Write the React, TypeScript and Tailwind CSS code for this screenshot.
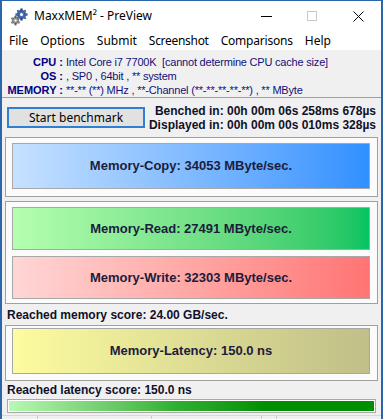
import React from 'react';

const ui = { fontFamily: '"Noto Sans", "Open Sans", sans-serif' };
const tah = { fontFamily: '"Liberation Sans", Arial, sans-serif' };

const Gears = () => (
  <svg width="18" height="18" viewBox="0 0 18 18">
    <g fill="#4a6fb5" stroke="#2c4a86" strokeWidth="0.6">
      <circle cx="11.5" cy="6.5" r="4.2" />
      {[0, 45, 90, 135, 180, 225, 270, 315].map(a => (
        <rect key={a} x="10.7" y="0.8" width="1.6" height="2.4" transform={`rotate(${a} 11.5 6.5)`} />
      ))}
    </g>
    <circle cx="11.5" cy="6.5" r="1.5" fill="#fff" />
    <g fill="#9a9a9a" stroke="#5a5a5a" strokeWidth="0.5">
      <circle cx="5.5" cy="12.5" r="3.2" />
      {[0, 60, 120, 180, 240, 300].map(a => (
        <rect key={a} x="4.8" y="7.9" width="1.4" height="2" transform={`rotate(${a} 5.5 12.5)`} />
      ))}
    </g>
    <circle cx="5.5" cy="12.5" r="1.1" fill="#fff" />
  </svg>
);

const Bar = ({ label, cls, h }: { label: string; cls: string; h: string }) => (
  <div className={`${cls} ${h} border border-[#a8a8a8] flex items-center justify-center`}>
    <span className="text-[13px] font-bold text-[#1c1c3c]" style={tah}>{label}</span>
  </div>
);

export default function App() {
  return (
    <div className="w-[383px] h-[419px] overflow-hidden bg-white flex flex-col border-l-2 border-r-2 border-t border-[#2b66ad]">
      {/* title bar */}
      <div className="h-[30px] flex items-center shrink-0" style={ui}>
        <div className="ml-[8px] mt-[1px]"><Gears /></div>
        <span className="ml-[6px] text-[12px] text-black">MaxxMEM² - PreView</span>
        <div className="ml-auto flex items-center">
          <div className="w-[46px] flex justify-center"><div className="w-[11px] h-px bg-black" /></div>
          <div className="w-[46px] flex justify-center"><div className="w-[10px] h-[10px] border border-[#c8c8c8]" /></div>
          <div className="w-[46px] flex justify-center">
            <svg width="11" height="11" viewBox="0 0 11 11"><path d="M0.5 0.5L10.5 10.5M10.5 0.5L0.5 10.5" stroke="#000" strokeWidth="1" /></svg>
          </div>
        </div>
      </div>
      {/* menu */}
      <div className="h-[19px] flex items-center text-[12px] text-black shrink-0 pl-[7px] gap-[12px]" style={ui}>
        <span>File</span>
        <span>Options</span>
        <span>Submit</span>
        <span className="tracking-[-0.3px]">Screenshot</span>
        <span className="tracking-[-0.2px]">Comparisons</span>
        <span>Help</span>
      </div>
      {/* client */}
      <div className="flex-1 bg-[#f0f0f0] flex flex-col" style={tah}>
        <div className="pt-[5px] text-[11px] leading-[14px] text-[#10107a] border-b border-[#a0a0a0]">
          <div className="flex"><span className="w-[61px] text-right font-bold text-[#000080]">CPU :</span><span className="ml-[3px] tracking-[-0.2px]">Intel Core i7 7700K&nbsp; [cannot determine CPU cache size]</span></div>
          <div className="flex"><span className="w-[61px] text-right font-bold text-[#000080]">OS :</span><span className="ml-[3px] tracking-[-0.2px]">, SP0 , 64bit , ** system</span></div>
          <div className="flex"><span className="w-[61px] text-right font-bold text-[#000080]">MEMORY :</span><span className="ml-[3px] tracking-[-0.2px]">**-** (**) MHz , **-Channel (**-**-**-**-**) , ** MByte</span></div>
        </div>
        <div className="flex items-center justify-between h-[39px] pl-[5px] pr-[5px]">
          <div className="w-[138px] h-[21px] border-2 border-[#2f7fd3] bg-[#e1e1e1] flex items-center justify-center text-[12px] text-black" style={ui}>
            Start benchmark
          </div>
          <div className="text-right text-[12px] leading-[14px] font-bold text-[#10102a]">
            <div>Benched in: 00h 00m 06s 258ms 678µs</div>
            <div>Displayed in: 00h 00m 00s 010ms 328µs</div>
          </div>
        </div>
        <div className="mx-[3px] border border-[#a0a0a0] bg-[#fbfbfb] pt-[5px] pb-[7px] pl-[6px] pr-[7px]">
          <Bar label="Memory-Copy: 34053 MByte/sec." h="h-[46px]" cls="bg-gradient-to-r from-[#c6e1ff] to-[#2f90ff]" />
        </div>
        <div className="mt-[4px] mx-[3px] border border-[#a0a0a0] bg-[#fbfbfb] pt-[5px] pb-[4px] pl-[6px] pr-[7px] flex flex-col gap-[6px]">
          <Bar label="Memory-Read: 27491 MByte/sec." h="h-[43px]" cls="bg-gradient-to-r from-[#b4ffb0] to-[#00c462]" />
          <Bar label="Memory-Write: 32303 MByte/sec." h="h-[43px]" cls="bg-gradient-to-r from-[#ffd6d6] to-[#ff7474]" />
        </div>
        <div className="h-[21px] flex items-center pl-[5px] text-[12px] font-bold text-[#10102a]">Reached memory score: 24.00 GB/sec.</div>
        <div className="mx-[3px] border border-[#a0a0a0] bg-[#fbfbfb] pt-[2px] pb-[6px] pl-[6px] pr-[7px]">
          <Bar label="Memory-Latency: 150.0 ns" h="h-[46px]" cls="bg-gradient-to-r from-[#fdfca0] to-[#bfbf88]" />
        </div>
        <div className="h-[18px] flex items-center pl-[5px] text-[12px] font-bold text-[#10102a]">Reached latency score: 150.0 ns</div>
        <div className="mx-[5px] h-[14px] border border-[#a8a8a8] bg-white p-[1px]">
          <div className="h-full bg-gradient-to-r from-[#b8f8b4] via-[#30b030] via-45% to-[#008f00] to-70%" />
        </div>
        <div className="mt-[2px] flex-1 border-t border-[#d8d8d8] flex">
          <div className="w-[36px] border-r border-[#c8c8c8]" />
          <div className="w-[114px] border-r border-[#c8c8c8]" />
          <div className="w-[110px] border-r border-[#c8c8c8]" />
          <div className="w-[15px] border-r border-[#c8c8c8]" />
        </div>
      </div>
    </div>
  );
}
